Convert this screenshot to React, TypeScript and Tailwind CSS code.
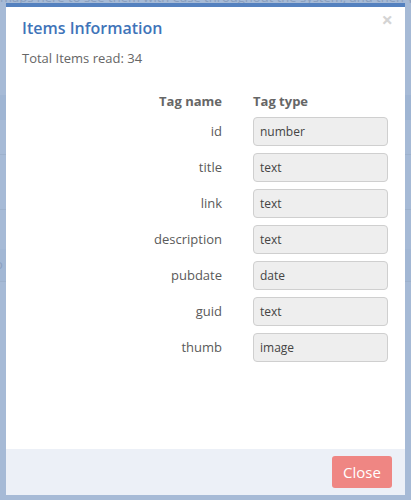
export default function App() {
  const rows: [string, string][] = [
    ["id", "number"],
    ["title", "text"],
    ["link", "text"],
    ["description", "text"],
    ["pubdate", "date"],
    ["guid", "text"],
    ["thumb", "image"],
  ];
  return (
    <div className="relative w-[411px] h-[500px] overflow-hidden bg-[#a6bad6] font-['Open_Sans',sans-serif]">
      <div className="flex flex-col">
        <div className="h-[3px] overflow-hidden">
          <div className="-mt-[12px] whitespace-nowrap text-[13px] leading-[18px] text-[#8a9fbd]">
            maps here to see them with ease throughout the system, and then you can use them
          </div>
        </div>
        <div className="h-[92px]" />
        <div className="h-[25px] bg-[#9fb5d3]" />
        <div className="h-[35px] border-b border-[#9db1cc]" />
        <div className="h-[55px] border-b border-[#9db1cc]" />
        <div className="h-[39px]" />
        <div className="h-[33px] bg-[#a2b7d4] border-b border-[#9db1cc] flex items-center">
          <span className="-ml-[5px] text-[13px] text-[#8ba0bf]">o</span>
        </div>
      </div>

      <div className="absolute left-[6px] top-[3px] w-[399px] h-[492px] bg-white border-t-4 border-[#5481bf] flex flex-col">
        <div className="relative px-4 pt-[9px]">
          <h2 className="text-[16px] leading-6 font-semibold text-[#3f74b9]">Items Information</h2>
          <button className="absolute right-[12px] top-[1px] text-[20px] leading-6 font-bold text-[#d4d4d4]">×</button>
          <p className="mt-[9px] text-[13px] leading-[18px] text-[#666]">Total Items read: 34</p>
        </div>
        <div className="mt-[25px] grid grid-cols-[216px_135px] gap-x-[31px] gap-y-[7px] items-center">
          <div className="text-right text-[13px] leading-[18px] font-bold text-[#666]">Tag name</div>
          <div className="text-[13px] leading-[18px] font-bold text-[#666]">Tag type</div>
          {rows.map(([name, type]) => (
            <div key={name} className="contents">
              <div className="text-right text-[13px] text-[#5a5a5a]">{name}</div>
              <div className="h-[29px] rounded-[4px] border border-[#cfcfcf] bg-[#eeeeee] px-[6px] flex items-center text-[12px] text-[#444]">
                {type}
              </div>
            </div>
          ))}
        </div>
        <div className="flex-1" />
        <div className="h-[46px] bg-[#ecf0f7] flex items-center justify-end pr-[13px]">
          <button className="w-[60px] h-[32px] rounded-[3px] bg-[#ef8683] text-white text-[15px]">Close</button>
        </div>
      </div>
    </div>
  );
}
